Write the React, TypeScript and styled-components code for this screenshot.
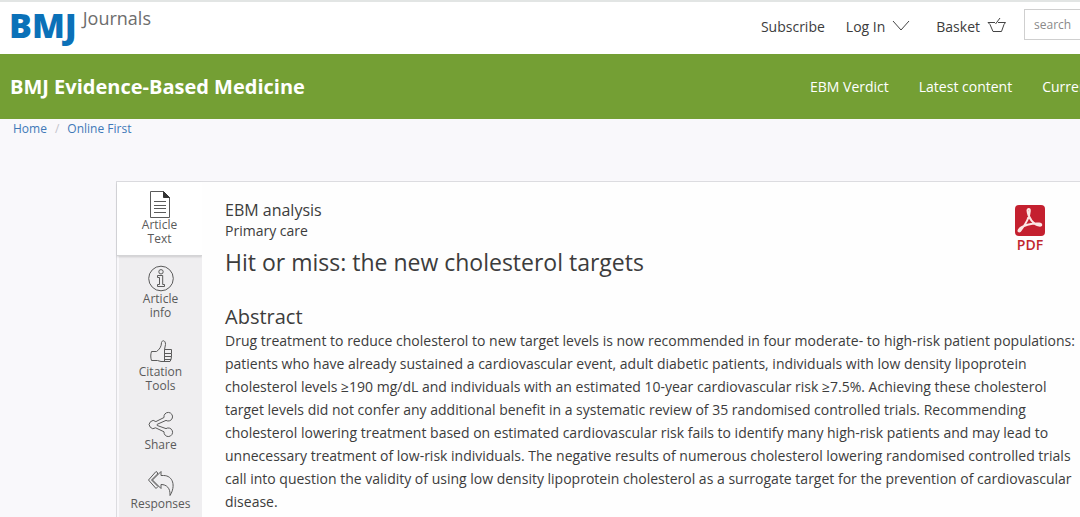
import React from "react";
import styled, { createGlobalStyle } from "styled-components";

const GlobalStyle = createGlobalStyle`
  * { box-sizing: border-box; }
  html { background: #f9f8fb; overflow-x: hidden; }
  body {
    margin: 0;
    color: #3c3c3c;
    font-family: "Open Sans", "Noto Sans", sans-serif;
    font-size: 14px;
  }
  a { color: inherit; text-decoration: none; }
  h1, h2, p { margin: 0; font-weight: 400; }
`;

const Page = styled.div`
  height: 100vh;
  overflow: hidden;
`;

const TopBar = styled.header`
  display: flex;
  justify-content: space-between;
  height: 54px;
  border-top: 2px solid #e2e5e4;
  background: #fff;
`;

const Logo = styled.a`
  display: flex;
  align-items: flex-start;
  gap: 6px;
  padding-left: 9px;
`;

const LogoMark = styled.span`
  color: #0b71b8;
  font-size: 34px;
  font-weight: 800;
  line-height: 46px;
`;

const LogoName = styled.span`
  color: #6d6d6d;
  font-size: 18px;
  line-height: 32px;
`;

const UserNav = styled.nav`
  display: flex;
  align-items: flex-start;
  padding-top: 7px;
`;

const UserLink = styled.a`
  display: flex;
  align-items: center;
  gap: 7px;
  height: 34px;
`;

const UserButton = styled.button`
  display: flex;
  align-items: center;
  gap: 7px;
  height: 34px;
  margin: 0 26px 0 21px;
  padding: 0;
  border: 0;
  background: none;
  color: inherit;
  font: inherit;
`;

const Search = styled.input`
  width: 56px;
  height: 31px;
  margin-left: 17px;
  padding: 0 0 0 9px;
  border: 1px solid #cfcfcf;
  border-right: 0;
  border-radius: 0;
  background: #fff;
  font: inherit;
  font-size: 12px;
  &::placeholder { color: #8a8a8a; opacity: 1; }
`;

const JournalBar = styled.div`
  display: flex;
  align-items: center;
  justify-content: space-between;
  height: 65px;
  padding-left: 10px;
  background: #749f34;
  color: #fff;
`;

const JournalName = styled.a`
  font-size: 20px;
  font-weight: 700;
`;

const JournalNav = styled.nav`
  display: flex;
  flex: 0 0 270px;
  gap: 30px;
  overflow: hidden;
  white-space: nowrap;
`;

const Breadcrumb = styled.nav`
  display: flex;
  gap: 8px;
  padding-left: 13px;
  color: #4078b8;
  font-size: 12px;
  line-height: 20px;
`;

const Slash = styled.span`
  color: #c4c4cc;
`;

const Article = styled.main`
  display: flex;
  min-height: 400px;
  margin: 42px 0 0 116px;
  border: 1px solid #dcdce0;
  border-right: 0;
  background: #fefefe;
`;

const Tabs = styled.nav`
  flex: 0 0 85px;
  display: flex;
  flex-direction: column;
  background: linear-gradient(to right, #f9f8fb 2px, #efeef0 2px);
`;

const Tab = styled.a<{ $active?: boolean }>`
  display: flex;
  flex-direction: column;
  align-items: center;
  padding: 9px 0 9px ${(p) => (p.$active ? 0 : 2)}px;
  background: ${(p) => (p.$active ? "#fff" : "transparent")};
  border-bottom: ${(p) => (p.$active ? "1px solid #d4d4d6" : "0")};
  box-shadow: ${(p) => (p.$active ? "0 1px 2px rgba(0, 0, 0, 0.15)" : "none")};
  color: #5a5a5a;
  font-size: 12px;
  line-height: 14px;
  text-align: center;
`;

const TabLabel = styled.span`
  width: min-content;
`;

const TabIcon = styled.svg`
  width: 28px;
  height: 27px;
  fill: none;
  stroke: #5a5a5a;
  stroke-width: 1;
  stroke-linejoin: round;
`;

const Content = styled.article`
  position: relative;
  flex: 1;
  min-width: 0;
  padding: 17px 0 0 23px;
  background: #fefefe;
`;

const Heading = styled.div`
  display: flex;
  justify-content: space-between;
`;

const Section = styled.p`
  font-size: 16px;
  line-height: 22px;
`;

const Topic = styled.p`
  line-height: 20px;
`;

const Title = styled.h1`
  margin-top: 4px;
  font-size: 23px;
  line-height: 34px;
`;

const PdfLink = styled.a`
  display: flex;
  flex-direction: column;
  align-items: center;
  width: 32px;
  margin: 6px 34px 0 0;
  color: #c1272d;
  font-weight: 600;
  line-height: 16px;
`;

const Abstract = styled.section`
  margin-top: 25px;
`;

const AbstractTitle = styled.h2`
  font-size: 20px;
  line-height: 25px;
`;

const AbstractText = styled.p`
  line-height: 23px;
`;

const DocumentIcon = () => (
  <TabIcon viewBox="0 0 28 27" aria-hidden="true">
    <path d="M4.5 .5H17l6.500 6V26.500H4.500Z" />
    <path d="M17.500 .5V6.500H23.500Z" fill="#333" stroke="#333" />
    <path d="M8 10.500H20M8 14.500H20M8 17.500H20M8 21.500H20" />
  </TabIcon>
);

const InfoIcon = () => (
  <TabIcon viewBox="0 0 28 27" aria-hidden="true">
    <circle cx="14" cy="13.500" r="12.300" />
    <circle cx="14" cy="6.800" r="2.200" />
    <path d="M10.500 10.500H15.700V19.500H17.500V21.500H10.500V19.500H12.500V12.500H10.500Z" />
  </TabIcon>
);

const ThumbIcon = () => (
  <TabIcon viewBox="0 0 28 27" aria-hidden="true">
    <path d="M4.500 13.500H9.500C12.500 11.500 14.500 8.500 14.500 4.500C15.500 1.500 18.700 2.500 18.500 6.500L17.500 11.500H24.500V15.500H17.500M24.500 15.500V18.500H17.500M24.500 18.500L24 21.500H17.500M24 21.500L23 23.500H14L10.500 22.500H4.500C3.500 19.500 3.500 16.500 4.500 13.500M17.500 11.500V23.500" />
  </TabIcon>
);

const ShareIcon = () => (
  <TabIcon viewBox="0 0 28 27" aria-hidden="true">
    <path d="M8.900 10.600L17 6.500A4.300 4.300 0 1 1 19 9.400L10.200 13.300L10.200 14.500L19 17.600A4.300 4.300 0 1 1 17 20.800L8.600 16.800A4 4 0 1 1 8.900 10.600Z" />
  </TabIcon>
);

const ReplyIcon = () => (
  <TabIcon viewBox="0 0 28 27" aria-hidden="true">
    <path d="M14 1.500L5.500 10L14 18.500V14.500C19.500 14.500 23.500 18 23 25.500C29 16 26 5.500 16.500 5.500H14Z" />
    <path d="M10.500 2.500L9 1.500L1.500 10L9 18.500L11 16.500L4.500 10L10.500 4Z" />
  </TabIcon>
);

const PdfIcon = () => (
  <svg width="30" height="32" viewBox="0 0 30 32" aria-hidden="true">
    <rect width="30" height="31" rx="4" fill="#c4202f" />
    <path
      d="M12.500 5.500C12.500 3.500 15 3.500 14.800 6C14.500 12 10 20 6 25C4.500 27.500 2.500 26.500 4 24.500C7 20.500 17 18 24 18.500C27 19 27 21.200 24 20.500C19 20 13 13 12.500 5.500Z"
      fill="none"
      stroke="#fbe6e4"
      strokeWidth="2"
      strokeLinejoin="round"
    />
  </svg>
);

const tabs = [
  { label: "Article Text", Icon: DocumentIcon, active: true },
  { label: "Article info", Icon: InfoIcon },
  { label: "Citation Tools", Icon: ThumbIcon },
  { label: "Share", Icon: ShareIcon },
  { label: "Responses", Icon: ReplyIcon },
];

export default function App() {
  return (
    <Page>
      <GlobalStyle />
      <TopBar>
        <Logo href="#">
          <LogoMark>BMJ</LogoMark>
          <LogoName>Journals</LogoName>
        </Logo>
        <UserNav aria-label="Account">
          <UserLink href="#">Subscribe</UserLink>
          <UserButton type="button">
            Log In
            <svg width="18" height="12" viewBox="0 0 18 12" fill="none" stroke="#444" aria-hidden="true">
              <path d="M1 1L9 10L17 1" />
            </svg>
          </UserButton>
          <UserLink href="#">
            Basket
            <svg width="20" height="18" viewBox="0 0 20 18" fill="none" stroke="#444" aria-hidden="true">
              <path d="M8 5.500H1L3 7.500L6 14.500H14.500L17 7.500L18.500 5.500H11M8.500 7L13 1" />
            </svg>
          </UserLink>
          <Search type="text" placeholder="search" aria-label="Search" />
        </UserNav>
      </TopBar>
      <JournalBar>
        <JournalName href="#">BMJ Evidence-Based Medicine</JournalName>
        <JournalNav aria-label="Journal">
          <a href="#">EBM Verdict</a>
          <a href="#">Latest content</a>
          <a href="#">Current issue</a>
        </JournalNav>
      </JournalBar>
      <Breadcrumb aria-label="Breadcrumb">
        <a href="#">Home</a>
        <Slash>/</Slash>
        <a href="#">Online First</a>
      </Breadcrumb>
      <Article>
        <Tabs aria-label="Article sections">
          {tabs.map(({ label, Icon, active }) => (
            <Tab key={label} href="#" $active={active}>
              <Icon />
              <TabLabel>{label}</TabLabel>
            </Tab>
          ))}
        </Tabs>
        <Content>
          <Heading>
            <div>
              <Section>EBM analysis</Section>
              <Topic>Primary care</Topic>
              <Title>Hit or miss: the new cholesterol targets</Title>
            </div>
            <PdfLink href="#">
              <PdfIcon />
              PDF
            </PdfLink>
          </Heading>
          <Abstract>
            <AbstractTitle>Abstract</AbstractTitle>
            <AbstractText>
              Drug treatment to reduce cholesterol to new target levels is now recommended in four moderate- to
              high-risk patient populations: patients who have already sustained a cardiovascular event, adult
              diabetic patients, individuals with low density lipoprotein cholesterol levels ≥190 mg/dL and
              individuals with an estimated 10-year cardiovascular risk ≥7.5%. Achieving these cholesterol target
              levels did not confer any additional benefit in a systematic review of 35 randomised controlled
              trials. Recommending cholesterol lowering treatment based on estimated cardiovascular risk fails to
              identify many high-risk patients and may lead to unnecessary treatment of low-risk individuals. The
              negative results of numerous cholesterol lowering randomised controlled trials call into question the
              validity of using low density lipoprotein cholesterol as a surrogate target for the prevention of
              cardiovascular disease.
            </AbstractText>
          </Abstract>
        </Content>
      </Article>
    </Page>
  );
}
